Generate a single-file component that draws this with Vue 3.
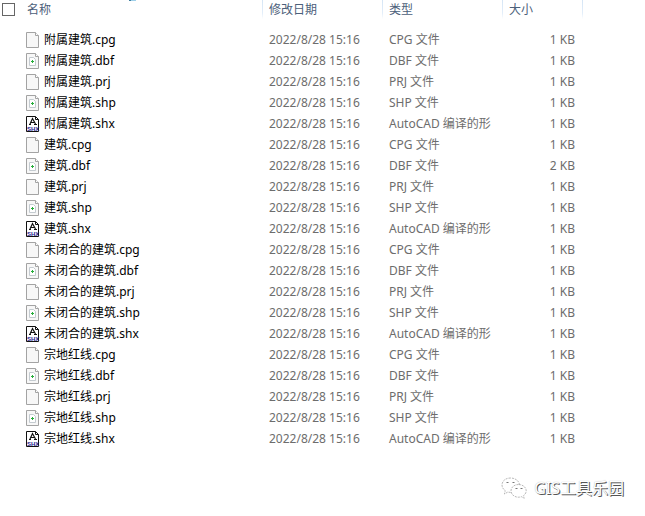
<script setup>
const groups = ['附属建筑', '建筑', '未闭合的建筑', '宗地红线']
const kinds = [
  { ext: 'cpg', type: 'CPG 文件', icon: 'blank' },
  { ext: 'dbf', type: 'DBF 文件', icon: 'data' },
  { ext: 'prj', type: 'PRJ 文件', icon: 'blank' },
  { ext: 'shp', type: 'SHP 文件', icon: 'data' },
  { ext: 'shx', type: 'AutoCAD 编译的形', icon: 'shx' },
]
const files = groups.flatMap((base) =>
  kinds.map((kind) => ({
    ...kind,
    name: `${base}.${kind.ext}`,
    modified: '2022/8/28 15:16',
    size: base === '建筑' && kind.ext === 'dbf' ? '2 KB' : '1 KB',
  })),
)
</script>

<template>
  <main class="explorer">
    <table class="files">
      <colgroup>
        <col class="col-check" />
        <col class="col-name" />
        <col class="col-date" />
        <col class="col-type" />
        <col class="col-size" />
        <col />
      </colgroup>
      <thead>
        <tr>
          <th class="check"><input type="checkbox" aria-label="全选" /></th>
          <th class="sorted" scope="col" aria-sort="ascending">
            名称
            <svg class="sort" viewBox="0 0 7 2" aria-hidden="true">
              <path d="M0 0h7v1H1z" fill="#9fd0ea" />
              <path d="M0 0h2v1H0z" fill="#3f7f9f" />
            </svg>
          </th>
          <th class="divided" scope="col">修改日期</th>
          <th class="divided" scope="col">类型</th>
          <th class="divided" scope="col">大小</th>
          <td class="divided"></td>
        </tr>
      </thead>
      <tbody>
        <tr v-for="file in files" :key="file.name">
          <td></td>
          <td class="name">
            <span class="file">
              <svg v-if="file.icon === 'shx'" class="icon" viewBox="0 0 14 16" aria-hidden="true">
                <path d="M.5.500h9l3 3v12H.5z" fill="#fff" stroke="#111" />
                <path d="M9.500.5v3h3" fill="none" stroke="#111" />
                <path d="M3 8.500h2M8 8.500h3M4 8l2.500-5.500L9.500 8M5 6.500h4" fill="none" stroke="#111" stroke-width="1.200" />
                <text x="1" y="15" class="glyph-shx">SHX</text>
              </svg>
              <svg v-else class="icon" viewBox="0 0 14 16" aria-hidden="true">
                <path d="M.5.5h9l3 3v12H.5z" fill="#f7f7f7" stroke="#a3a3a3" />
                <path d="M9.500.5v3h3" fill="#fff" stroke="#a3a3a3" />
                <g v-if="file.icon === 'data'">
                  <path d="M3.500 4.500h4l2 2v6h-6z" fill="#fff" stroke="#c4cbd0" />
                  <path d="M6.500 7v3M5 8.500h3" stroke="#27ad3b" />
                </g>
              </svg>
              {{ file.name }}
            </span>
          </td>
          <td>{{ file.modified }}</td>
          <td>{{ file.type }}</td>
          <td class="size">{{ file.size }}</td>
          <td></td>
        </tr>
      </tbody>
    </table>
    <footer class="credit">
      <svg class="wechat" viewBox="0 0 26 22" aria-hidden="true">
        <g fill="#fff" stroke="#999" stroke-width=".7" stroke-dasharray="2 1">
          <path d="M9.500 1C4.500 1 1 4 1 8c0 2.500 1.300 4.300 3.200 5.600L3.500 17l3.300-2c1 .3 2 .4 3.200.4 4.800 0 8.500-3.200 8.500-7.200S14.500 1 9.500 1z" />
          <path d="M17.500 7.500c-4.300 0-7.500 2.800-7.500 6.300s3.200 6.400 7.500 6.400c1 0 2-.2 2.900-.5l2.800 1.600-.7-2.600c1.700-1.200 2.700-2.900 2.700-4.900 0-3.500-3.400-6.300-7.700-6.300z" />
        </g>
        <path d="M5.500 5.500h2M11.500 5.500h2M14.500 11.500h2M19.500 11.500h2" stroke="#777" />
      </svg>
      <span>GIS工具乐园</span>
    </footer>
  </main>
</template>

<style>
body {
  margin: 0;
  background: #fff;
}
</style>

<style scoped>
.explorer {
  font: 12px/20px "Noto Sans", "Noto Sans CJK SC", sans-serif;
  color: #6d6d6d;
}
.files {
  width: 100%;
  table-layout: fixed;
  border-collapse: collapse;
}
.col-check { width: 20px; }
.col-name { width: 242px; }
.col-date,
.col-type { width: 120px; }
.col-size { width: 80px; }
th,
td {
  height: 21px;
  box-sizing: border-box;
  padding: 0 0 0 7px;
  line-height: 20px;
  text-align: left;
  white-space: nowrap;
}
thead th,
thead td {
  height: 29px;
  padding-bottom: 9px;
  vertical-align: top;
  font-weight: 400;
  color: #4c607a;
}
.divided {
  background: linear-gradient(#d5e5f5, #e3eefa 70%, #fff) no-repeat 0 0 / 1px 19px;
}
thead .check { padding: 3px 0 0 2px; }
.check input {
  appearance: none;
  display: block;
  box-sizing: border-box;
  width: 13px;
  height: 13px;
  margin: 0;
  border: 1px solid #666;
  background: #fff;
}
.sorted { position: relative; }
.sort {
  position: absolute;
  top: 0;
  left: 45%;
  width: 7px;
  height: 2px;
}
td.name {
  padding-left: 6px;
  color: #000;
}
.file {
  display: flex;
  align-items: center;
  gap: 4px;
}
.icon {
  flex: none;
  width: 14px;
  height: 16px;
}
.glyph-shx {
  font: bold 6px "Liberation Sans", sans-serif;
  fill: #1b1b8f;
}
td.size {
  padding-right: 7px;
  text-align: right;
}
.credit {
  display: flex;
  justify-content: flex-end;
  align-items: center;
  gap: 7px;
  padding: 27px 21px 0 0;
  font-size: 16px;
  line-height: 24px;
  color: #fff;
  text-shadow: 1px 1px 0 #555, 0 0 1px #aaa;
}
.wechat {
  width: 26px;
  height: 22px;
}
</style>
